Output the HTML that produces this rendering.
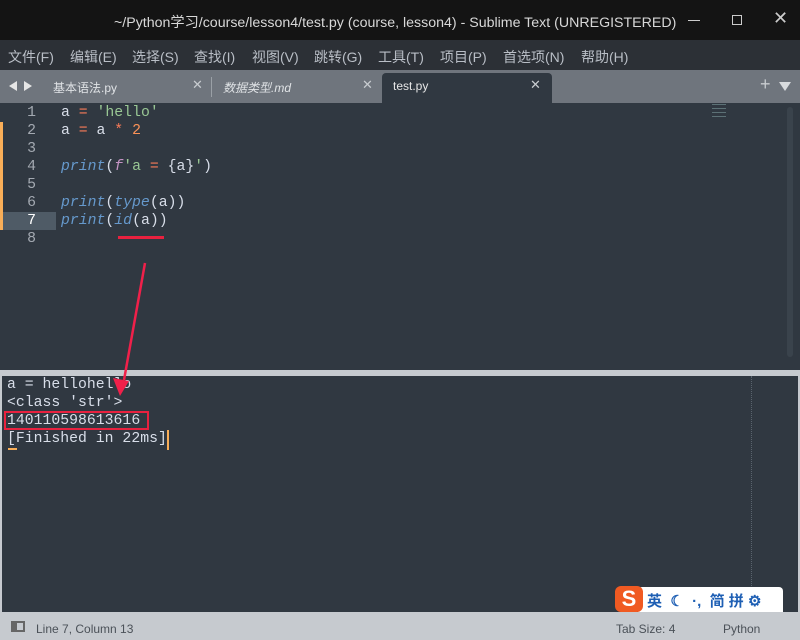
<!DOCTYPE html>
<html><head><meta charset="utf-8"><style>
*{margin:0;padding:0;box-sizing:border-box}
body{width:800px;height:640px;overflow:hidden;background:#303841;font-family:"Liberation Sans","Noto Sans CJK SC",sans-serif;position:relative}
.abs{position:absolute}
.mono{font-family:"Liberation Mono","Noto Sans CJK SC",monospace;font-size:14.8px;white-space:pre}
#title{left:0;top:0;width:800px;height:40px;background:#141414;color:#d8d8d8;font-size:14.2px}
#menu{left:0;top:40px;width:800px;height:30px;background:#2c3036;color:#b9bec6;font-size:14px}
#tabs{left:0;top:70px;width:800px;height:33px;background:#6f757d}
.ln{color:#a3a9b1;width:36px;text-align:right}
.k{color:#6699cc;font-style:italic}
.o{color:#f97b58}
.s{color:#99c794}
.w{color:#d8dee9}
.f{color:#c594c5;font-style:italic}
</style></head><body>
<div id="title" class="abs">
 <div class="abs" style="left:114px;top:12px">~/Python学习/course/lesson4/test.py (course, lesson4) - Sublime Text (UNREGISTERED)</div>
 <div class="abs" style="left:688px;top:20px;width:12px;height:1px;background:#ccc"></div>
 <div class="abs" style="left:732px;top:15px;width:10px;height:10px;border:1px solid #ccc"></div>
 <div class="abs" style="left:773px;top:8px;font-size:18px;color:#ccc">✕</div>
</div>
<div id="menu" class="abs">
 <span class="abs" style="left:8px;top:7px">文件(F)</span>
 <span class="abs" style="left:70px;top:7px">编辑(E)</span>
 <span class="abs" style="left:132px;top:7px">选择(S)</span>
 <span class="abs" style="left:194px;top:7px">查找(I)</span>
 <span class="abs" style="left:252px;top:7px">视图(V)</span>
 <span class="abs" style="left:314px;top:7px">跳转(G)</span>
 <span class="abs" style="left:378px;top:7px">工具(T)</span>
 <span class="abs" style="left:440px;top:7px">项目(P)</span>
 <span class="abs" style="left:503px;top:7px">首选项(N)</span>
 <span class="abs" style="left:581px;top:7px">帮助(H)</span>
</div>
<div id="tabs" class="abs">
 <div class="abs" style="left:9px;top:11px;width:0;height:0;border-top:5px solid transparent;border-bottom:5px solid transparent;border-right:8px solid #e6e6e6"></div>
 <div class="abs" style="left:24px;top:11px;width:0;height:0;border-top:5px solid transparent;border-bottom:5px solid transparent;border-left:8px solid #e6e6e6"></div>
 <span class="abs" style="left:53px;top:9px;font-size:12px;color:#e0e3e6">基本语法.py</span>
 <span class="abs" style="left:192px;top:7px;font-size:13px;color:#c8ccd0">✕</span>
 <div class="abs" style="left:211px;top:7px;width:1px;height:20px;background:#9aa0a6"></div>
 <span class="abs" style="left:223px;top:9px;font-size:12px;color:#e0e3e6;font-style:italic">数据类型.md</span>
 <span class="abs" style="left:362px;top:7px;font-size:13px;color:#c8ccd0">✕</span>
 <div class="abs" style="left:382px;top:3px;width:170px;height:30px;background:#303841;border-radius:4px 4px 0 0"></div>
 <span class="abs" style="left:393px;top:9px;font-size:12px;color:#e6e6e6">test.py</span>
 <span class="abs" style="left:530px;top:7px;font-size:13px;color:#c8ccd0">✕</span>
 <span class="abs" style="left:760px;top:4px;font-size:18px;color:#c8ccd0">+</span>
 <div class="abs" style="left:779px;top:12px;width:0;height:0;border-left:6px solid transparent;border-right:6px solid transparent;border-top:9px solid #d8dbde"></div>
</div>
<!-- editor -->
<div class="abs" style="left:0;top:122px;width:3px;height:108px;background:#f9ae58"></div>
<div class="abs" style="left:3px;top:212px;width:53px;height:18px;background:#4f5b66"></div>
<div class="abs" style="left:712px;top:104px;width:14px;height:14px;opacity:.5;background:repeating-linear-gradient(#8aa 0 1px,transparent 1px 4px)"></div>
<div class="abs" style="left:787px;top:107px;width:6px;height:250px;background:#3a434c;border-radius:3px"></div>
<div class="abs mono" style="left:0;top:104px;line-height:18px"><div class="ln">1</div><div class="ln">2</div><div class="ln">3</div><div class="ln">4</div><div class="ln">5</div><div class="ln">6</div><div class="ln" style="color:#fff">7</div><div class="ln">8</div></div>
<div class="abs mono w" style="left:61px;top:104px;line-height:18px"><div>a <span class="o">=</span> <span class="s">'hello'</span></div><div>a <span class="o">=</span> a <span class="o">*</span> <span class="o" style="color:#f99157">2</span></div><div> </div><div><span class="k">print</span>(<span class="f">f</span><span class="s">'a </span><span class="o">=</span><span class="s"> </span>{a}<span class="s">'</span>)</div><div> </div><div><span class="k">print</span>(<span class="k">type</span>(a))</div><div><span class="k">print</span>(<span class="k">id</span>(a))</div></div>
<div class="abs" style="left:118px;top:236px;width:46px;height:3px;background:#e8213f"></div>
<!-- separator -->
<div class="abs" style="left:0;top:370px;width:800px;height:6px;background:#c6cacf"></div>
<div class="abs" style="left:0;top:376px;width:2px;height:236px;background:#c6cacf"></div>
<div class="abs" style="left:798px;top:376px;width:2px;height:236px;background:#c6cacf"></div>
<div class="abs" style="left:751px;top:376px;width:0;height:236px;border-left:1px dotted #5a646e"></div>
<!-- output -->
<div class="abs mono w" style="left:7px;top:376px;line-height:18px"><div>a = hellohello</div><div>&lt;class 'str'&gt;</div><div>140110598613616</div><div>[Finished in 22ms]</div></div>
<div class="abs" style="left:4px;top:411px;width:145px;height:19px;border:2px solid #e8213f"></div>
<div class="abs" style="left:8px;top:448px;width:9px;height:2px;background:#f9ae58"></div>
<div class="abs" style="left:167px;top:430px;width:2px;height:20px;background:#f9ae58"></div>
<!-- arrow -->
<svg class="abs" style="left:0;top:0" width="800" height="640"><line x1="145" y1="263" x2="124" y2="380" stroke="#f0204a" stroke-width="2.5"/><polygon points="113,378 129,381 120,396" fill="#f0204a"/></svg>
<!-- IME -->
<div class="abs" style="left:638px;top:587px;width:145px;height:25px;background:#fff;border-radius:4px 4px 0 0"></div>
<div class="abs" style="left:615px;top:586px;width:28px;height:26px;background:#f05a22;border-radius:6px;color:#fff;font-weight:bold;font-size:22px;text-align:center;line-height:26px">S</div>
<div class="abs" style="left:647px;top:590px;font-size:15px;color:#1e5fb4;font-weight:bold;white-space:pre">英  ☾  ·,  简 拼 ⚙</div>
<!-- status -->
<div class="abs" style="left:0;top:612px;width:800px;height:28px;background:#c6cacf;color:#4b5158;font-size:12px">
 <div class="abs" style="left:11px;top:9px;width:14px;height:11px;border:2px solid #666"><div style="width:4px;height:7px;background:#666"></div></div>
 <span class="abs" style="left:36px;top:10px">Line 7, Column 13</span>
 <span class="abs" style="left:616px;top:10px">Tab Size: 4</span>
 <span class="abs" style="left:723px;top:10px">Python</span>
</div>
</body></html>
